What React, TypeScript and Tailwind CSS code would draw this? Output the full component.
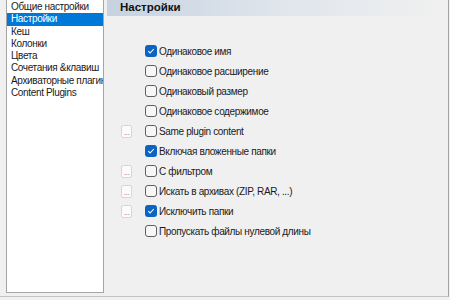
import React from 'react';

const items = [
  'Общие настройки',
  'Настройки',
  'Кеш',
  'Колонки',
  'Цвета',
  'Сочетания &клавиш',
  'Архиваторные плагин',
  'Content Plugins',
];

const options = [
  { label: 'Одинаковое имя', checked: true, btn: false },
  { label: 'Одинаковое расширение', checked: false, btn: false },
  { label: 'Одинаковый размер', checked: false, btn: false },
  { label: 'Одинаковое содержимое', checked: false, btn: false },
  { label: 'Same plugin content', checked: false, btn: true },
  { label: 'Включая вложенные папки', checked: true, btn: false },
  { label: 'С фильтром', checked: false, btn: true },
  { label: 'Искать в архивах (ZIP, RAR, ...)', checked: false, btn: true },
  { label: 'Исключить папки', checked: true, btn: true },
  { label: 'Пропускать файлы нулевой длины', checked: false, btn: false },
];

function Checkbox({ checked }: { checked: boolean }) {
  if (checked) {
    return (
      <div className="w-[12px] h-[12px] rounded-[3px] bg-[#0a64c2] flex items-center justify-center">
        <svg width="8" height="8" viewBox="0 0 8 8">
          <path d="M1.3 4.2 L3.1 6 L6.8 2" fill="none" stroke="#fff" strokeWidth="1.1" />
        </svg>
      </div>
    );
  }
  return <div className="w-[12px] h-[12px] rounded-[3px] border border-[#5f5f5f] bg-[#f7f7f7]" />;
}

export default function App() {
  return (
    <div className="w-[450px] h-[300px] bg-[#f0f0f0] overflow-hidden text-[10px] tracking-[-0.35px] text-[#1a1a1a] font-['Liberation_Sans',Arial,sans-serif]">
      <div className="w-[449px] h-[297px] flex border-r border-r-[#a3a3a3] border-b border-b-[#c4c4c4]">
        {/* tree list */}
        <div className="ml-[6px] w-[98px] h-[293px] bg-white border-x border-b border-[#a5a5a5] overflow-hidden pt-[1px]">
          {items.map((it, i) => (
            <div
              key={it}
              className={`h-[12.3px] leading-[12.3px] pl-[4px] whitespace-nowrap ${i === 1 ? 'bg-[#0078d7] text-white' : ''}`}
            >
              {it}
            </div>
          ))}
        </div>

        {/* settings page */}
        <div className="flex-1 ml-[3px] flex flex-col">
          <div className="h-[16px] mr-[8px] bg-gradient-to-r from-[#c6d2e0] via-[#dfe5ec] to-[#f0f0f0] pl-[13px] flex items-center font-bold text-[11.5px] tracking-normal text-[#111]">
            Настройки
          </div>
          <div className="pt-[25px] flex flex-col">
            {options.map((o) => (
              <div key={o.label} className="h-[20px] flex items-center">
                <div className="w-[38px] pl-[14px]">
                  {o.btn && (
                    <div className="w-[11px] h-[13px] rounded-[2px] border border-[#d6d6d6] bg-[#fbfbfb] text-[8px] text-[#777] flex items-end justify-center leading-[9px]">
                      ...
                    </div>
                  )}
                </div>
                <Checkbox checked={o.checked} />
                <span className="ml-[2px] whitespace-nowrap">{o.label}</span>
              </div>
            ))}
          </div>
        </div>
      </div>
    </div>
  );
}
